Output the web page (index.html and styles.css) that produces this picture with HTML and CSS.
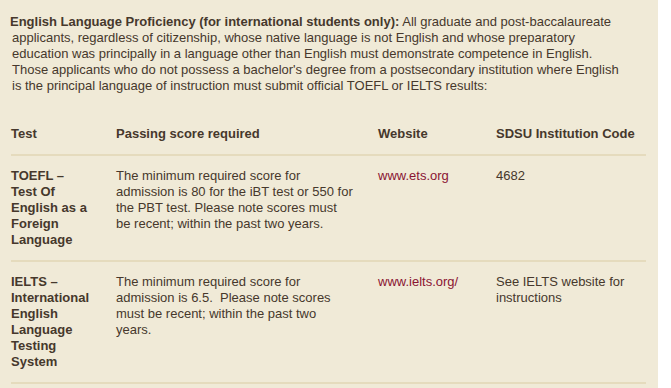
FILE: index.html
```html
<!DOCTYPE html>
<html lang="en">
<head>
<meta charset="utf-8">
<title>English Language Proficiency</title>
<link rel="stylesheet" href="styles.css">
</head>
<body>
<div class="page">
  <p class="intro"><strong>English Language Proficiency (for international students only):</strong> All graduate and post-baccalaureate<br>applicants, regardless of citizenship, whose native language is not English and whose preparatory<br>education was principally in a language other than English must demonstrate competence in English.<br>Those applicants who do not possess a bachelor's degree from a postsecondary institution where English<br>is the principal language of instruction must submit official TOEFL or IELTS results:</p>
  <table class="tests">
    <colgroup>
      <col class="c-test">
      <col class="c-score">
      <col class="c-site">
      <col class="c-code">
    </colgroup>
    <thead>
      <tr>
        <th>Test</th>
        <th>Passing score required</th>
        <th>Website</th>
        <th>SDSU Institution Code</th>
      </tr>
    </thead>
    <tbody>
      <tr>
        <td class="name">TOEFL –<br>Test Of English as a Foreign Language</td>
        <td>The minimum required score for<br>admission is 80 for the iBT test or 550 for<br>the PBT test. Please note scores must<br>be recent; within the past two years.</td>
        <td><a href="#">www.ets.org</a></td>
        <td>4682</td>
      </tr>
      <tr>
        <td class="name">IELTS –<br>International English Language Testing System</td>
        <td>The minimum required score for<br>admission is 6.5.&nbsp; Please note scores<br>must be recent; within the past two<br>years.</td>
        <td><a href="#">www.ielts.org/</a></td>
        <td>See IELTS website for instructions</td>
      </tr>
    </tbody>
  </table>
</div>
</body>
</html>
```

FILE: styles.css
```css
html, body {
  margin: 0;
  padding: 0;
  background: #ffffff;
}

.page {
  width: 658px;
  min-height: 388px;
  box-sizing: border-box;
  background: #f0ead7;
  padding: 14px 0 0 11px;
  font-family: "Liberation Sans", Arial, sans-serif;
  font-size: 13px;
  line-height: 16px;
  color: #46382c;
}

.intro {
  margin: 0 0 20px 0;
  padding-left: 1px;
  text-indent: -2px;
  white-space: nowrap;
}

.intro strong {
  font-weight: bold;
}

.tests {
  width: 635px;
  table-layout: fixed;
  border-collapse: collapse;
}

.c-test { width: 105px; }
.c-score { width: 262px; }
.c-site { width: 118px; }
.c-code { width: 150px; }

.tests th,
.tests td {
  text-align: left;
  vertical-align: top;
  padding: 12px 10px 12px 0;
  border-bottom: 2px solid #e5dbbd;
}

.tests th {
  font-weight: bold;
}

.tests td.name {
  padding-right: 15px;
  font-weight: bold;
}

.tests td:nth-child(2) {
  padding-right: 14px;
  white-space: nowrap;
}

.tests a {
  color: #8a1432;
  text-decoration: none;
}
```
